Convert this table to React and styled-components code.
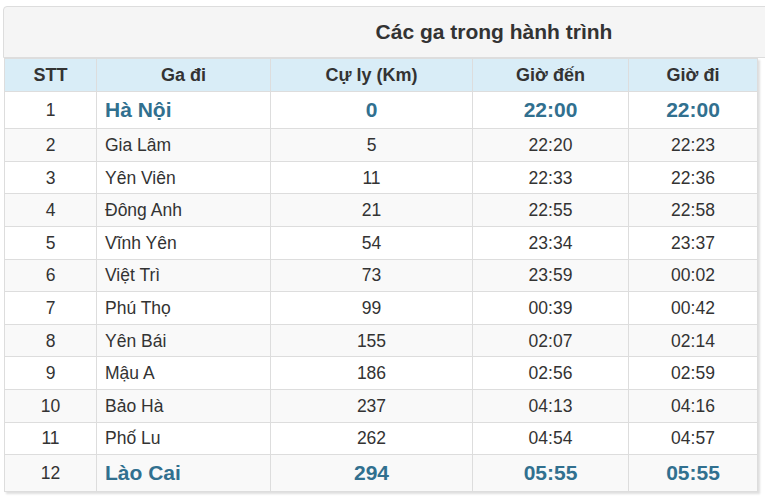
import React from "react";
import styled, { createGlobalStyle } from "styled-components";

const GlobalStyle = createGlobalStyle`
  html, body {
    margin: 0;
    padding: 0;
    background: #fff;
    overflow: hidden;
  }
  body {
    font-family: "Liberation Sans", Arial, sans-serif;
    color: #333;
  }
`;

const Page = styled.div`
  box-sizing: border-box;
  width: 765px;
  height: 502px;
  padding: 6px 0 0 3px;
  overflow: hidden;
`;

const Heading = styled.div`
  box-sizing: border-box;
  width: 982px;
  height: 52px;
  border: 1px solid #ddd;
  border-radius: 4px 4px 0 0;
  background: #f5f5f5;
  display: flex;
  align-items: center;
  justify-content: center;
  font-size: 21px;
  font-weight: bold;
  color: #333;
`;

const Table = styled.table`
  margin-left: 1px;
  width: 753px;
  border-collapse: collapse;
  table-layout: fixed;
  box-shadow: 2px 2px 2px rgba(0, 0, 0, 0.13);
`;

const HeadCell = styled.th`
  background: #d9edf7;
  border: 1px solid #ddd;
  height: 32px;
  padding: 0;
  font-size: 18px;
  font-weight: bold;
  color: #333;
  text-align: center;
`;

const Row = styled.tr`
  background: ${(p) => (p.$striped ? "#f9f9f9" : "#fff")};
`;

const Cell = styled.td`
  border: 1px solid #ddd;
  height: ${(p) => (p.$big ? "36.2px" : "31.6px")};
  line-height: 20px;
  padding: 0 ${(p) => (p.$left ? "8px" : "0")};
  text-align: ${(p) => (p.$left ? "left" : "center")};
  font-size: ${(p) => (p.$big ? "21px" : "17.5px")};
  font-weight: ${(p) => (p.$big ? "bold" : "normal")};
  color: ${(p) => (p.$big ? "#31708f" : "#333")};
`;

const IndexCell = styled.td`
  border: 1px solid #ddd;
  padding: 0;
  line-height: 20px;
  text-align: center;
  font-size: 17.5px;
  color: #333;
`;

const stations = [
  ["Hà Nội", 0, "22:00", "22:00"],
  ["Gia Lâm", 5, "22:20", "22:23"],
  ["Yên Viên", 11, "22:33", "22:36"],
  ["Đông Anh", 21, "22:55", "22:58"],
  ["Vĩnh Yên", 54, "23:34", "23:37"],
  ["Việt Trì", 73, "23:59", "00:02"],
  ["Phú Thọ", 99, "00:39", "00:42"],
  ["Yên Bái", 155, "02:07", "02:14"],
  ["Mậu A", 186, "02:56", "02:59"],
  ["Bảo Hà", 237, "04:13", "04:16"],
  ["Phố Lu", 262, "04:54", "04:57"],
  ["Lào Cai", 294, "05:55", "05:55"],
];

const App = () => {
  return (
    <Page>
      <GlobalStyle />
      <Heading>Các ga trong hành trình</Heading>
      <Table>
        <colgroup>
          <col style={{ width: 92 }} />
          <col style={{ width: 174 }} />
          <col style={{ width: 202 }} />
          <col style={{ width: 156 }} />
          <col style={{ width: 129 }} />
        </colgroup>
        <thead>
          <tr>
            <HeadCell>STT</HeadCell>
            <HeadCell>Ga đi</HeadCell>
            <HeadCell>Cự ly (Km)</HeadCell>
            <HeadCell>Giờ đến</HeadCell>
            <HeadCell>Giờ đi</HeadCell>
          </tr>
        </thead>
        <tbody>
          {stations.map(([name, km, arrive, depart], i) => {
            const big = i === 0 || i === stations.length - 1;
            return (
              <Row key={name} $striped={i % 2 === 1}>
                <IndexCell>{i + 1}</IndexCell>
                <Cell $big={big} $left>
                  {name}
                </Cell>
                <Cell $big={big}>{km}</Cell>
                <Cell $big={big}>{arrive}</Cell>
                <Cell $big={big}>{depart}</Cell>
              </Row>
            );
          })}
        </tbody>
      </Table>
    </Page>
  );
};

export default App;
